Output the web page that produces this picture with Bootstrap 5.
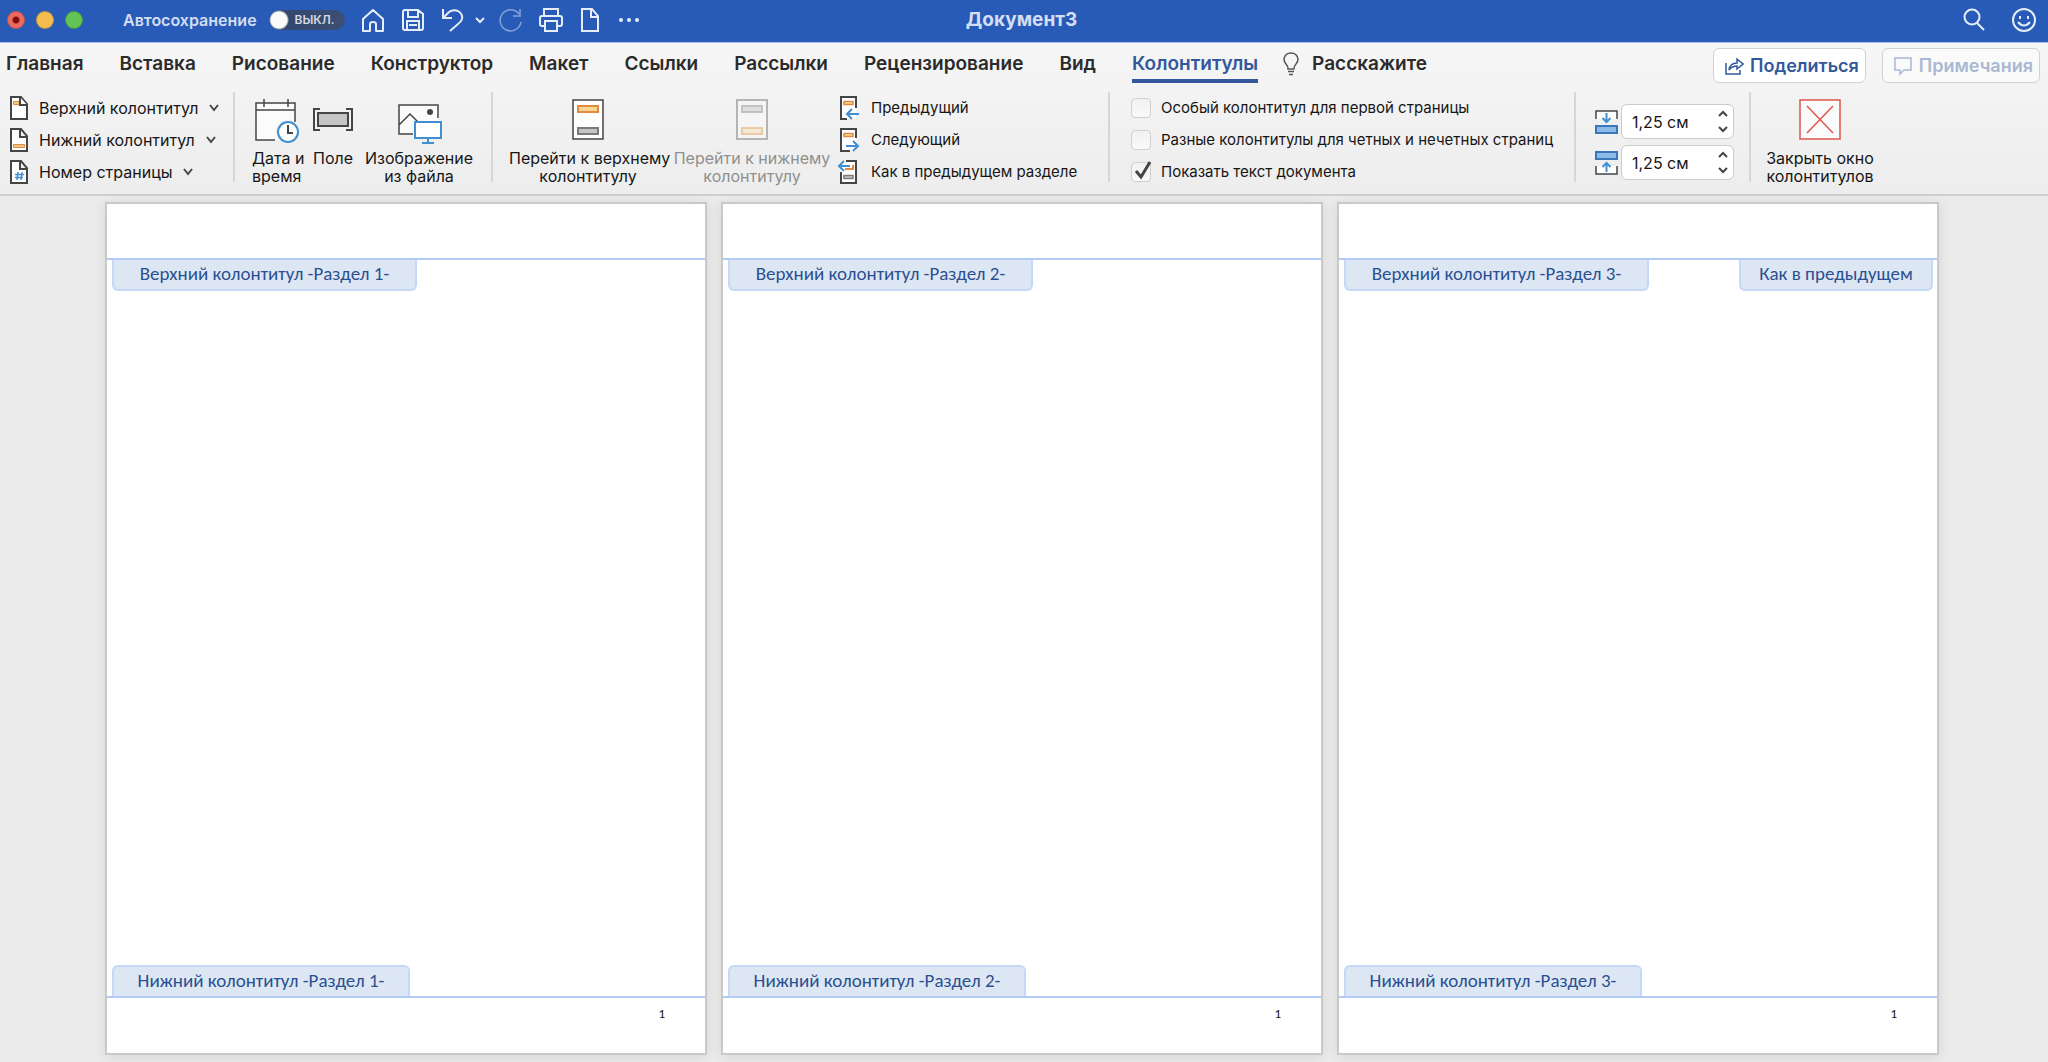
<!DOCTYPE html>
<html lang="ru">
<head>
<meta charset="utf-8">
<meta name="viewport" content="width=device-width, initial-scale=1">
<title>Документ3</title>
<link rel="stylesheet" href="https://cdn.jsdelivr.net/npm/bootstrap@5.3.0/dist/css/bootstrap.min.css">
<style>
body{font-family:Inter,"Liberation Sans",sans-serif;background:#ebebeb;color:#161616}
button{font-family:inherit}
svg{display:block;flex:none;fill:none}
.plain-btn{background:none;border:0;padding:0;color:inherit}
/* title bar */
.titlebar{height:43px;padding:0 12px 3px 7px;background:#285bb7;border-bottom:1px solid #a9c1ea;color:#d3def2}
.titlebar svg{stroke:#e6edf8;stroke-width:2}
.bar-side{flex:1 1 0}
.lights{gap:11px}
.light{width:18px;height:18px;border-radius:50%;border:1px solid #0003}
.light-red{background:radial-gradient(circle,#7c1009 0 3px,#ee6a5f 4px)}
.light-amber{background:#f5bd4f}
.light-green{background:#61c454}
.autosave{font-size:16px;font-weight:600;line-height:20px;margin-left:40px;gap:12px}
.switch-box{appearance:none;width:76px;height:20px;border-radius:10px;margin:0;background:radial-gradient(circle at 10px 10px,#fafafa 0 8px,#33486f 10px,#3c4f74)}
.switch-text{position:absolute;right:10px;top:0;font-size:12px;font-weight:600;line-height:20px;color:#d5dae4}
.undo-more{margin-left:8px}
.redo-btn{margin-left:12px}
.doc-title{font-size:19px;font-weight:700;line-height:24px;margin:0}
.bar-end{gap:26px}
/* tabs */
.ribbon{background:linear-gradient(#f6f6f6,#ededed);border-bottom:2px solid #cfcfcf}
.tabs-row{height:49px;padding:0 8px 0 6px}
.tab-link{font-size:19px;font-weight:600;line-height:24px;color:#2b2b2b;text-decoration:none;padding:9px 0 3px;border-bottom:4px solid transparent}
.tabs-gap{gap:36px}
.tab-tell{gap:12px}
.tab-current{color:#32589b;border-image:linear-gradient(#32589b,#32589b) 1}
.side-btn{height:35px;margin-top:5px;font-size:18px;font-weight:600;line-height:24px;color:#32589b;background:#fff;border:1px solid #d2d2d2;border-radius:6px;padding:1px 6px 0 10px;gap:6px}
.side-btn svg{stroke:currentColor;stroke-width:2}
.side-btn:disabled{color:#a9b8d4;background:#fafafa}
/* command groups */
.group-row{font-size:16px;line-height:18px;height:102px}
.cmd-group{height:90px;border-right:2px solid #d6d6d6;flex:none}
.g-insert{width:235px;padding-left:9px}
.g-objects{width:258px;padding-left:17px}
.g-nav{width:617px;padding-left:16px;gap:6px}
.g-options{width:466px;padding-left:21px}
.g-position{width:175px;padding:12px 0 0 18px}
.g-close{padding-left:12px;border:0}
.cmd-line{height:32px;gap:10px;white-space:nowrap}
.g-nav .cmd-line,.g-options .cmd-line{font-size:15px}
.cmd-big{padding-top:4px;white-space:nowrap}
.cmd-big svg{margin:0 auto 3px}
.w-date{width:48px}.w-field{width:42px;margin-left:12px}.w-image{width:110px;margin-left:10px}.w-go{width:158px}.w-close{width:114px}
.cmd-big:disabled{color:#8f8f8f}
.dark{stroke:#454545;stroke-width:2}
.tick{appearance:none;width:20px;height:20px;margin:0;flex:none;border:1px solid #d0d0d0;border-radius:4px;background:linear-gradient(#f1f1f1,#fafafa)}
.tick-wrap svg{position:absolute;left:3px;top:-2px;pointer-events:none}
.spin-row{gap:2px;margin-bottom:6px}
.spin{height:35px;width:113px;background:#fff;border:1px solid #cbcbcb;border-radius:6px}
.spin input{width:76px;border:0;background:none;padding:0 0 0 10px;color:inherit;outline:0}
/* canvas */
.canvas-area{padding:6px 109px 7px 105px;gap:14px}
.sheet{flex:1 1 0;background:#fff;border:2px solid #c9c9c9;box-shadow:0 2px 12px #00000018;font-family:Carlito,"Noto Sans",sans-serif}
.sheet-head{height:56px;border-bottom:2px solid #b1caf7}
.sheet-foot{height:57px;border-top:2px solid #b1caf7;font-size:13px;line-height:14px;padding:9px 40px 0 0;color:#111}
.mark-tag{height:31px;border:2px solid #c4d8f8;background:#dce7f3;color:#2c4f91;font-size:19px;line-height:28px;text-align:center;white-space:nowrap}
.tag-head{border-top:0;border-radius:0 0 6px 6px;width:305px}
.tag-foot{border-bottom:0;border-radius:6px 6px 0 0;width:298px}
.tag-same{width:194px}
.tag-row{padding:0 4px 0 5px}
</style>
<script src="https://cdn.jsdelivr.net/npm/bootstrap@5.3.0/dist/js/bootstrap.bundle.min.js"></script>
</head>
<body class="d-flex flex-column min-vh-100">
<header>
  <div class="titlebar d-flex align-items-center">
    <div class="bar-side d-flex align-items-center">
      <div class="lights d-flex">
        <button class="light light-red p-0" aria-label="Закрыть"></button>
        <button class="light light-amber p-0" aria-label="Свернуть"></button>
        <button class="light light-green p-0" aria-label="Развернуть"></button>
      </div>
      <div class="autosave d-flex align-items-center">
        <label for="autosave">Автосохранение</label>
        <span class="position-relative d-flex"><input class="switch-box" type="checkbox" role="switch" id="autosave"><span class="switch-text">ВЫКЛ.</span></span>
      </div>
      <button class="plain-btn ms-3" aria-label="Главная"><svg width="24" height="24" viewBox="0 0 24 24"><path d="M2 11 12 2l10 9v12h-7v-7q0-2-3-2t-3 2v7H2z" stroke-linejoin="round"/></svg></button>
      <button class="plain-btn ms-3" aria-label="Сохранить"><svg width="24" height="24" viewBox="0 0 24 24"><path d="M4 2h13l5 4v14q0 2-2 2H4q-2 0-2-2V4q0-2 2-2zM7 2v7h10V2M6 22v-9h12v9M8 17h8"/></svg></button>
      <button class="plain-btn ms-3" aria-label="Отменить"><svg width="24" height="24" viewBox="0 0 24 24"><path d="M2 1v9h9M2 10l6-6q4-3 9-1 5 3 4 8-1 3-4 5l-8 7"/></svg></button>
      <button class="plain-btn undo-more" aria-label="Варианты отмены"><svg width="14" height="12" viewBox="0 0 14 12"><path d="m3 4 4 4 4-4"/></svg></button>
      <button class="plain-btn redo-btn opacity-50" aria-label="Повторить"><svg width="24" height="24" viewBox="0 0 24 24"><path d="M20 6a10.500 10.500 0 1 0 2 8M21 1v7h-7" stroke-width="1.500"/></svg></button>
      <button class="plain-btn ms-3" aria-label="Печать"><svg width="24" height="24" viewBox="0 0 24 24"><path d="M5 8V1h14v7M5 18H3q-2 0-2-2v-6q0-2 2-2h18q2 0 2 2v6q0 2-2 2h-2M6 13h12v10H6z"/></svg></button>
      <button class="plain-btn ms-3" aria-label="Создать"><svg width="22" height="24" viewBox="0 0 22 24"><path d="M3 1h10l6 7v15H3zM12 1v8h7"/></svg></button>
      <button class="plain-btn ms-3" aria-label="Ещё"><svg width="24" height="24" viewBox="0 0 24 24"><path d="M4 12h0m8 0h0m8 0h0" stroke-width="4" stroke-linecap="round"/></svg></button>
    </div>
    <h1 class="doc-title">Документ3</h1>
    <div class="bar-side bar-end d-flex justify-content-end">
      <button class="plain-btn" aria-label="Поиск"><svg width="24" height="24" viewBox="0 0 24 24"><circle cx="10" cy="9" r="7.500"/><path d="m15 15 7 7"/></svg></button>
      <button class="plain-btn" aria-label="Отзыв"><svg width="24" height="24" viewBox="0 0 24 24"><circle cx="12" cy="12" r="11"/><path d="M6 14q6 7 12 0M8 8v3m8-3v3"/></svg></button>
    </div>
  </div>
  <div class="ribbon">
    <div class="tabs-row d-flex align-items-start">
      <nav class="tabs-gap d-flex" aria-label="Вкладки">
        <a class="tab-link" href="#">Главная</a>
        <a class="tab-link" href="#">Вставка</a>
        <a class="tab-link" href="#">Рисование</a>
        <a class="tab-link" href="#">Конструктор</a>
        <a class="tab-link" href="#">Макет</a>
        <a class="tab-link" href="#">Ссылки</a>
        <a class="tab-link" href="#">Рассылки</a>
        <a class="tab-link" href="#">Рецензирование</a>
        <a class="tab-link" href="#">Вид</a>
        <a class="tab-link tab-current" href="#" aria-current="page">Колонтитулы</a>
      </nav>
      <a class="tab-link tab-tell d-flex ms-4" href="#"><svg width="18" height="24" viewBox="0 0 18 24"><path d="M6 17q0-3-2-5-2-2-2-5 1-6 7-6t7 6q0 3-2 5t-2 5zM6 19.500h6M7 22.500h4" stroke="#555" stroke-width="1.500"/></svg>Расскажите</a>
      <button class="side-btn d-flex align-items-center ms-auto"><svg width="20" height="20" viewBox="0 0 20 20"><path d="M2 7v11h14v-4M5 14q1-7 8-7V3l6 5-6 5v-3q-5 0-8 4z" stroke-width="1.500"/></svg>Поделиться</button>
      <button class="side-btn d-flex align-items-center ms-3" disabled><svg width="20" height="20" viewBox="0 0 20 20"><path d="M2 2h16v12H11l-4 4v-4H2z" stroke-width="1.500"/></svg>Примечания</button>
    </div>
    <div class="group-row d-flex">
      <div class="cmd-group g-insert">
        <button class="plain-btn cmd-line d-flex align-items-center"><svg width="20" height="24" viewBox="0 0 20 24"><path class="dark" fill="#fff" d="M2 1h10l6 7v15H2z"/><path fill="#f5c77d" stroke="#e08a44" d="M4.500 5.500h6v3h-6z"/><path class="dark" fill="#fff" d="M11 1v8h7"/></svg>Верхний колонтитул<svg width="12" height="12" viewBox="0 0 12 12"><path class="dark" d="m2 3 4 5 4-5"/></svg></button>
        <button class="plain-btn cmd-line d-flex align-items-center"><svg width="20" height="24" viewBox="0 0 20 24"><path class="dark" fill="#fff" d="M2 1h10l6 7v15H2zM11 1v8h7"/><path fill="#f5c77d" stroke="#e08a44" d="M4.500 16.500h11v3h-11z"/></svg>Нижний колонтитул<svg width="12" height="12" viewBox="0 0 12 12"><path class="dark" d="m2 3 4 5 4-5"/></svg></button>
        <button class="plain-btn cmd-line d-flex align-items-center"><svg width="20" height="24" viewBox="0 0 20 24"><path class="dark" fill="#fff" d="M2 1h10l6 7v15H2zM11 1v8h7"/><path stroke="#3f8fd2" stroke-width="1.500" d="M9 12l-1 8m5-8-1 8M6 14.500h9M6 17.500h8"/></svg>Номер страницы<svg width="12" height="12" viewBox="0 0 12 12"><path class="dark" d="m2 3 4 5 4-5"/></svg></button>
      </div>
      <div class="cmd-group g-objects d-flex align-items-start">
        <button class="plain-btn cmd-big w-date"><svg width="48" height="50" viewBox="0 0 48 50"><path fill="#fbfbfb" d="M4 7h39v37H4z"/><path stroke="#454545" stroke-width="1.500" d="M23 44H4V7h39v19M4 14h39M12 3v8M36 3v8"/><circle cx="36" cy="36" r="12" fill="#f2f2f2"/><circle cx="36" cy="36" r="10" fill="#fff" stroke="#3f8fd2" stroke-width="2"/><path class="dark" d="M36 29v8h5"/></svg>Дата и<br>время</button>
        <button class="plain-btn cmd-big w-field"><svg width="42" height="50" viewBox="0 0 42 50"><path class="dark" d="M8 13H2v21h6M34 13h6v21h-6"/><path class="dark" fill="#c6c5c3" d="M6 17h30v13H6z"/></svg>Поле</button>
        <button class="plain-btn cmd-big w-image"><svg width="46" height="50" viewBox="0 0 46 50"><path fill="#fbfbfb" d="M4 9h38v28H4z"/><path stroke="#454545" stroke-width="1.500" d="M17 38H3V9h39v13M3 29l11-11 8 8"/><circle cx="34" cy="16" r="3" fill="#454545"/><path d="M19 26h26v16H19z" fill="#fff" stroke="#3f8fd2" stroke-width="2"/><path d="M32 42v5m-6 0h12" stroke="#3f8fd2" stroke-width="2"/></svg>Изображение<br>из файла</button>
      </div>
      <div class="cmd-group g-nav d-flex align-items-start">
        <button class="plain-btn cmd-big w-go"><svg width="34" height="50" viewBox="0 0 34 50"><path stroke="#454545" stroke-width="1.500" fill="#fff" d="M2 4h30v39H2z"/><path fill="#f8d78f" stroke="#e08a44" stroke-width="2" d="M7 10h20v6H7z"/><path fill="#c6c5c3" stroke="#7b7b7b" stroke-width="2" d="M7 32h20v6H7z"/></svg>Перейти к верхнему<br>колонтитулу</button>
        <button class="plain-btn cmd-big w-go" disabled><svg width="34" height="50" viewBox="0 0 34 50"><path fill="#f5f5f5" stroke="#b4b4b4" stroke-width="2" d="M2 4h30v39H2z"/><path fill="#dedede" stroke="#c2c2c2" stroke-width="2" d="M7 10h20v6H7z"/><path fill="#f3e9d3" stroke="#ecc9a9" stroke-width="2" d="M7 32h20v6H7z"/></svg>Перейти к нижнему<br>колонтитулу</button>
        <div>
          <button class="plain-btn cmd-line d-flex align-items-center"><svg width="24" height="26" viewBox="2 0 24 26"><path fill="#fff" d="M6 2h15v22H6z"/><path class="dark" d="M12 24H6V2h15v11"/><path fill="#f8d78f" stroke="#e08a44" stroke-width="1.500" d="M9 6.500h9v3H9z"/><path stroke="#3f8fd2" stroke-width="2" d="M24 19H12m5-5-5 5 5 5"/></svg>Предыдущий</button>
          <button class="plain-btn cmd-line d-flex align-items-center"><svg width="24" height="26" viewBox="2 0 24 26"><path fill="#fff" d="M6 2h15v22H6z"/><path class="dark" d="M15 24H6V2h15v9"/><path fill="#f8d78f" stroke="#e08a44" stroke-width="1.500" d="M9 6.500h9v3H9z"/><path stroke="#3f8fd2" stroke-width="2" d="M11 19h12m-5-5 5 5-5 5"/></svg>Следующий</button>
          <button class="plain-btn cmd-line d-flex align-items-center"><svg width="24" height="26" viewBox="2 0 24 26"><path fill="#fff" d="M6 2h15v22H6z"/><path class="dark" d="M11 2h10v22H6V13"/><path stroke="#e08a44" stroke-width="2" d="M10 10h8V6"/><path fill="#c6c5c3" stroke="#7b7b7b" stroke-width="1.500" d="M9 16.500h9v3H9z"/><path stroke="#3f8fd2" stroke-width="2" d="M15 7H4m5-5-5 5 5 5"/></svg>Как в предыдущем разделе</button>
        </div>
      </div>
      <div class="cmd-group g-options">
        <div class="cmd-line d-flex align-items-center"><input class="tick" type="checkbox" id="opt-first"><label for="opt-first">Особый колонтитул для первой страницы</label></div>
        <div class="cmd-line d-flex align-items-center"><input class="tick" type="checkbox" id="opt-odd"><label for="opt-odd">Разные колонтитулы для четных и нечетных страниц</label></div>
        <div class="cmd-line d-flex align-items-center"><span class="tick-wrap position-relative d-flex"><input class="tick" type="checkbox" id="opt-text" checked><svg width="18" height="20" viewBox="0 0 18 20"><path d="m2 11 5 6L16 2" stroke="#444" stroke-width="3"/></svg></span><label for="opt-text">Показать текст документа</label></div>
      </div>
      <div class="cmd-group g-position">
        <div class="spin-row d-flex align-items-center">
          <svg width="25" height="26" viewBox="0 0 25 26"><path stroke="#454545" stroke-width="1.500" fill="#fff" d="M2 10V2h21v8"/><path stroke="#3f8fd2" stroke-width="2" d="M12.500 4v9m-4-4 4 4 4-4"/><path fill="#8dbbe8" stroke="#3a76ba" stroke-width="2" d="M2 17h21v7H2z"/></svg>
          <div class="spin d-flex"><input type="text" value="1,25 см" aria-label="Верхний колонтитул от края"><span class="d-flex flex-column justify-content-evenly ms-auto me-1"><button class="plain-btn" aria-label="Больше"><svg width="12" height="10" viewBox="0 0 12 10"><path class="dark" d="m2 7 4-4 4 4"/></svg></button><button class="plain-btn" aria-label="Меньше"><svg width="12" height="10" viewBox="0 0 12 10"><path class="dark" d="m2 3 4 4 4-4"/></svg></button></span></div>
        </div>
        <div class="spin-row d-flex align-items-center">
          <svg width="25" height="26" viewBox="0 0 25 26"><path stroke="#454545" stroke-width="1.500" fill="#fff" d="M2 16v8h21v-8"/><path stroke="#3f8fd2" stroke-width="2" d="M12.500 22v-9m-4 4 4-4 4 4"/><path fill="#8dbbe8" stroke="#3a76ba" stroke-width="2" d="M2 2h21v7H2z"/></svg>
          <div class="spin d-flex"><input type="text" value="1,25 см" aria-label="Нижний колонтитул от края"><span class="d-flex flex-column justify-content-evenly ms-auto me-1"><button class="plain-btn" aria-label="Больше"><svg width="12" height="10" viewBox="0 0 12 10"><path class="dark" d="m2 7 4-4 4 4"/></svg></button><button class="plain-btn" aria-label="Меньше"><svg width="12" height="10" viewBox="0 0 12 10"><path class="dark" d="m2 3 4 4 4-4"/></svg></button></span></div>
        </div>
      </div>
      <div class="cmd-group g-close">
        <button class="plain-btn cmd-big w-close"><svg width="42" height="50" viewBox="0 0 42 50"><path fill="#fbfbfb" stroke="#e0564d" stroke-width="1.500" d="M1 4h40v39H1zM8 10l26 27m0-27L8 37"/></svg>Закрыть окно<br>колонтитулов</button>
      </div>
    </div>
  </div>
</header>
<main class="canvas-area d-flex flex-grow-1">
  <section class="sheet d-flex flex-column">
    <div class="sheet-head"></div>
    <div class="tag-row d-flex"><div class="mark-tag tag-head">Верхний колонтитул -Раздел 1-</div></div>
    <div class="tag-row d-flex mt-auto"><div class="mark-tag tag-foot">Нижний колонтитул -Раздел 1-</div></div>
    <div class="sheet-foot text-end">1</div>
  </section>
  <section class="sheet d-flex flex-column">
    <div class="sheet-head"></div>
    <div class="tag-row d-flex"><div class="mark-tag tag-head">Верхний колонтитул -Раздел 2-</div></div>
    <div class="tag-row d-flex mt-auto"><div class="mark-tag tag-foot">Нижний колонтитул -Раздел 2-</div></div>
    <div class="sheet-foot text-end">1</div>
  </section>
  <section class="sheet d-flex flex-column">
    <div class="sheet-head"></div>
    <div class="tag-row d-flex justify-content-between"><div class="mark-tag tag-head">Верхний колонтитул -Раздел 3-</div><div class="mark-tag tag-head tag-same">Как в предыдущем</div></div>
    <div class="tag-row d-flex mt-auto"><div class="mark-tag tag-foot">Нижний колонтитул -Раздел 3-</div></div>
    <div class="sheet-foot text-end">1</div>
  </section>
</main>
</body>
</html>
